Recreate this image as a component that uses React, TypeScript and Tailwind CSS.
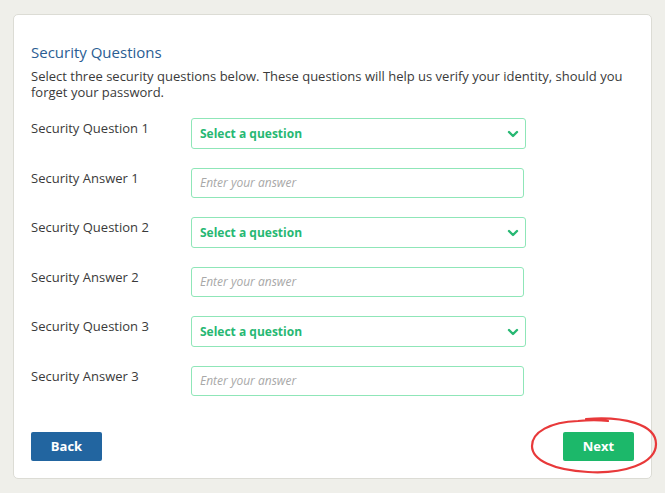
import React from "react";

const questions = [1, 2, 3];

const Chevron = () => (
  <svg width="12" height="8" viewBox="0 0 12 8" className="text-[#27b873]">
    <path d="M2 2l4 4 4-4" fill="none" stroke="currentColor" strokeWidth="2.4" strokeLinecap="round" strokeLinejoin="round" />
  </svg>
);

const FieldRow = ({ label, children }: { label: string; children: React.ReactNode }) => (
  <div className="flex items-start">
    <label className="w-[160px] shrink-0 pt-[1px] text-[13px] text-[#3a3a3a]">{label}</label>
    <div className="w-[335px]">{children}</div>
  </div>
);

const App = () => {
  return (
    <div className="min-h-[493px] bg-[#efefea] px-[13px] pt-[14px] pb-[13px] font-['Open_Sans',sans-serif]">
      <div className="relative rounded-[5px] border border-[#dcdcd5] bg-white px-[17px] pt-[27px] pb-[17px]">
        <h2 className="text-[15px] leading-[20px] text-[#2a5d93]">Security Questions</h2>
        <p className="mt-[6px] text-[13px] leading-[16px] text-[#3a3a3a]">
          Select three security questions below. These questions will help us verify your identity, should you
          forget your password.
        </p>

        <div className="mt-[18px] flex flex-col gap-[19px]">
          {questions.map((n) => (
            <React.Fragment key={n}>
              <FieldRow label={`Security Question ${n}`}>
                <div className="flex h-[31px] items-center justify-between rounded-[3px] border border-[#8fe6b8] pl-[8px] pr-[6px]">
                  <span className="text-[12px] font-bold text-[#27b873]">Select a question</span>
                  <Chevron />
                </div>
              </FieldRow>
              <FieldRow label={`Security Answer ${n}`}>
                <div className="flex h-[30px] w-[333px] items-center rounded-[3px] border border-[#8fe6b8] px-[8px]">
                  <span className="text-[12px] italic text-[#a8a8a8]">Enter your answer</span>
                </div>
              </FieldRow>
            </React.Fragment>
          ))}
        </div>

        <div className="mt-[36px] flex justify-between">
          <button className="h-[29px] w-[71px] rounded-[2px] bg-[#2265a0] text-[13px] font-bold text-white">Back</button>
          <button className="h-[29px] w-[71px] rounded-[2px] bg-[#1cb86a] text-[13px] font-bold text-white">Next</button>
        </div>

        {/* hand-drawn highlight around Next */}
        <svg className="pointer-events-none absolute right-[-9px] bottom-[2px]" width="132" height="60" viewBox="0 0 132 60">
          <path
            d="M58 3 C 95 0, 128 8, 128 28 C 128 48, 95 58, 60 56 C 25 54, 4 44, 4 30 C 4 16, 22 6, 50 5 C 60 4, 72 4, 80 5"
            fill="none"
            stroke="#e8393a"
            strokeWidth="2.2"
            strokeLinecap="round"
          />
        </svg>
      </div>
    </div>
  );
};

export default App;
